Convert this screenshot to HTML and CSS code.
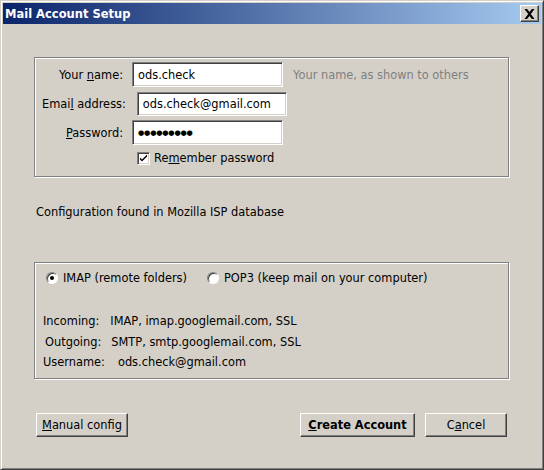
FILE: index.html
```html
<!DOCTYPE html>
<html>
<head>
<meta charset="utf-8">
<link rel="stylesheet" href="styles.css">
</head>
<body>
<div class="window">
  <div class="titlebar">
    <span class="title">Mail Account Setup</span>
    <span class="close"><svg width="11" height="10" viewBox="0 0 11 10"><path d="M0.5 0h2.6l2.4 3.1L7.9 0h2.6L6.8 5l3.7 5H7.9L5.5 6.9 3.1 10H0.5l3.7-5z" fill="#000"/></svg></span>
  </div>
  <div class="content">
    <div class="group identity">
      <div class="row">
        <span class="label">Your <u>n</u>ame:</span>
        <span class="field name">ods.check</span>
        <span class="hint">Your name, as shown to others</span>
      </div>
      <div class="row">
        <span class="label">Emai<u>l</u> address:</span>
        <span class="field email">ods.check@gmail.com</span>
      </div>
      <div class="row">
        <span class="label"><u>P</u>assword:</span>
        <span class="field pass"><span class="dots">●●●●●●●●●</span></span>
      </div>
      <div class="check-row">
        <span class="checkbox"><svg width="9" height="9" viewBox="0 0 9 9"><path d="M1 3.5l2 2 5-5v2l-5 5-2-2z" fill="#000"/></svg></span>
        <span>Re<u>m</u>ember password</span>
      </div>
    </div>
    <p class="status">Configuration found in Mozilla ISP database</p>
    <div class="group result">
      <div class="radios">
        <span class="radio-item"><span class="radio checked"></span>IMAP (remote folders)</span>
        <span class="radio-item"><span class="radio"></span>POP3 (keep mail on your computer)</span>
      </div>
      <div class="info">
        <div class="info-row"><span class="ilabel">Incoming:</span><span>IMAP, imap.googlemail.com, SSL</span></div>
        <div class="info-row"><span class="ilabel">Outgoing:</span><span>SMTP, smtp.googlemail.com, SSL</span></div>
        <div class="info-row"><span class="ilabel">Username:</span><span class="uval">ods.check@gmail.com</span></div>
      </div>
    </div>
    <div class="buttons">
      <span class="btn manual"><u>M</u>anual config</span>
      <span class="spacer"></span>
      <span class="btn create"><u>C</u>reate Account</span>
      <span class="btn cancel">C<u>a</u>ncel</span>
    </div>
  </div>
</div>
</body>
</html>
```
FILE: styles.css
```css
html, body {
  margin: 0;
  padding: 0;
  background: #d4d0c8;
}
body {
  font-family: "DejaVu Sans", Verdana, sans-serif;
  font-size: 11.4px;
  color: #000;
}
u { text-decoration: underline; text-underline-offset: 1px; }

.window {
  width: 544px;
  height: 470px;
  box-sizing: border-box;
  border: 1px solid;
  border-color: #d4d0c8 #404040 #404040 #d4d0c8;
  box-shadow: inset 1px 1px 0 #fff, inset -1px -1px 0 #808080;
  padding: 2px;
  display: flex;
  flex-direction: column;
}

.titlebar {
  height: 21px;
  flex: none;
  display: flex;
  align-items: center;
  justify-content: space-between;
  background: linear-gradient(to right, #0a246a, #a6caf0);
  padding: 0 2px 0 2px;
}
.title {
  color: #fff;
  font-weight: bold;
  font-size: 11.5px;
}
.close {
  width: 19px;
  height: 17px;
  box-sizing: border-box;
  background: #d4d0c8;
  border: 1px solid;
  border-color: #fff #404040 #404040 #fff;
  box-shadow: inset -1px -1px 0 #808080;
  display: flex;
  align-items: center;
  justify-content: center;
}

.content {
  flex: 1;
  padding: 33px 0 0 31px;
  display: flex;
  flex-direction: column;
}

.group {
  width: 475px;
  box-sizing: border-box;
  border: 1px solid #808080;
  box-shadow: inset 1px 1px 0 #fff, 1px 1px 0 #fff;
}
.identity {
  height: 120px;
  padding: 4px 0 0 0;
  display: flex;
  flex-direction: column;
  gap: 4px;
}
.row {
  display: flex;
  align-items: center;
  height: 25px;
}
.label {
  min-width: 88px;
  text-align: right;
  margin-right: 9px;
  white-space: nowrap;
}
.row:nth-child(2) .label { min-width: 0; margin-left: 7px; margin-right: 11px; }
.field {
  height: 25px;
  box-sizing: border-box;
  background: #fff;
  border: 1px solid;
  border-color: #808080 #fff #fff #808080;
  box-shadow: inset 1px 1px 0 #404040, inset -1px -1px 0 #d4d0c8;
  display: flex;
  align-items: center;
  padding-left: 5px;
  width: 151px;
}
.field.email { width: 150px; height: 24px; }
.dots {
  font-size: 7.2px;
  letter-spacing: -0.2px;
}
.hint {
  color: #808080;
  margin-left: 10px;
}
.check-row {
  display: flex;
  align-items: center;
  height: 16px;
  margin: 1px 0 0 102px;
  gap: 4px;
}
.checkbox {
  width: 13px;
  height: 13px;
  box-sizing: border-box;
  background: #fff;
  border: 1px solid;
  border-color: #808080 #fff #fff #808080;
  box-shadow: inset 1px 1px 0 #404040, inset -1px -1px 0 #d4d0c8;
  display: flex;
  align-items: center;
  justify-content: center;
}

.status {
  margin: 28px 0 0 2px;
  height: 15px;
  line-height: 15px;
}

.result {
  margin-top: 42px;
  height: 117px;
  padding: 7px 0 0 11px;
}
.radios {
  display: flex;
  align-items: center;
  height: 16px;
}
.radio-item {
  display: flex;
  align-items: center;
  gap: 5px;
}
.radio-item + .radio-item { margin-left: 20px; }
.radio {
  width: 12px;
  height: 12px;
  box-sizing: border-box;
  border-radius: 50%;
  background: #fff;
  border: 1px solid;
  border-color: #808080 #fff #fff #808080;
  box-shadow: inset 1px 1px 0 #404040;
  display: flex;
  align-items: center;
  justify-content: center;
}
.radio.checked::after {
  content: "";
  width: 4px;
  height: 4px;
  border-radius: 50%;
  background: #000;
}
.info {
  margin-top: 27px;
  display: flex;
  flex-direction: column;
  gap: 4.5px;
  margin-left: -3px;
}
.info-row {
  height: 16px;
  display: flex;
  align-items: center;
}
.ilabel { margin-right: 11px; }
.info-row:nth-child(2) .ilabel { margin-left: 2px; margin-right: 10px; }
.uval { margin-left: 2px; }

.buttons {
  margin-top: 34px;
  display: flex;
  align-items: center;
  width: 473px;
  padding-left: 2px;
  box-sizing: border-box;
}
.spacer { flex: 1; }
.btn {
  height: 24px;
  box-sizing: border-box;
  border: 1px solid;
  border-color: #fff #404040 #404040 #fff;
  box-shadow: inset -1px -1px 0 #808080, inset 1px 1px 0 #d4d0c8;
  display: flex;
  align-items: center;
  justify-content: center;
}
.manual { width: 92px; }
.create { width: 115px; font-weight: bold; margin-right: 10px; }
.cancel { width: 82px; }
```
